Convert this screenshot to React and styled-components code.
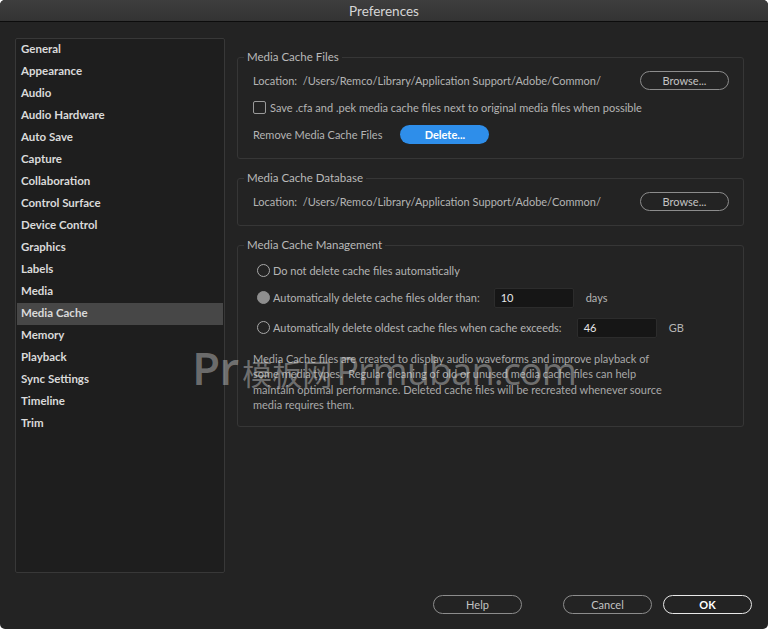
import React from 'react';
import styled, { createGlobalStyle } from 'styled-components';

const GlobalStyle = createGlobalStyle`
  html, body {
    margin: 0;
    padding: 0;
    background: #ffffff;
  }
  * {
    box-sizing: border-box;
  }
`;

const FONT = `Lato, "Noto Sans", "Noto Sans CJK SC", sans-serif`;

const sections = [
  'General', 'Appearance', 'Audio', 'Audio Hardware', 'Auto Save', 'Capture',
  'Collaboration', 'Control Surface', 'Device Control', 'Graphics', 'Labels',
  'Media', 'Media Cache', 'Memory', 'Playback', 'Sync Settings', 'Timeline', 'Trim',
];

const PATH = '/Users/Remco/Library/Application Support/Adobe/Common/';

export default function App() {
  return (
    <>
      <GlobalStyle />
      <Window>
        <TitleBar>Preferences</TitleBar>
        <Body>
          <Sidebar>
            {sections.map((s) => (
              <NavItem key={s} $active={s === 'Media Cache'}>{s}</NavItem>
            ))}
          </Sidebar>

          <Panel>
            {/* Media Cache Files */}
            <Group>
              <Legend>Media Cache Files</Legend>
              <Content>
                <Row>
                  <Label>Location:&nbsp;&nbsp;{PATH}</Label>
                  <Spacer />
                  <Button>Browse...</Button>
                </Row>
                <Row>
                  <Checkbox />
                  <Label>Save .cfa and .pek media cache files next to original media files when possible</Label>
                </Row>
                <Row>
                  <Label>Remove Media Cache Files</Label>
                  <Button $primary $offset={18}>Delete...</Button>
                </Row>
              </Content>
            </Group>

            {/* Media Cache Database */}
            <Group>
              <Legend>Media Cache Database</Legend>
              <Content>
                <Row>
                  <Label>Location:&nbsp;&nbsp;{PATH}</Label>
                  <Spacer />
                  <Button>Browse...</Button>
                </Row>
              </Content>
            </Group>

            {/* Media Cache Management */}
            <Group>
              <Legend>Media Cache Management</Legend>
              <Content $bottom={13}>
                <RadioRow $top={2}>
                  <Radio />
                  <Label>Do not delete cache files automatically</Label>
                </RadioRow>
                <RadioRow>
                  <Radio $checked />
                  <Label>Automatically delete cache files older than:</Label>
                  <Field $left={14}>10</Field>
                  <Unit>days</Unit>
                </RadioRow>
                <RadioRow $top={3}>
                  <Radio />
                  <Label>Automatically delete oldest cache files when cache exceeds:</Label>
                  <Field $left={15}>46</Field>
                  <Unit>GB</Unit>
                </RadioRow>
                <Note>
                  Media Cache files are created to display audio waveforms and improve playback of
                  some media types.&nbsp; Regular cleaning of old or unused media cache files can help
                  maintain optimal performance. Deleted cache files will be recreated whenever source
                  media requires them.
                </Note>
              </Content>
            </Group>
          </Panel>
        </Body>

        <Footer>
          <Button>Help</Button>
          <Button $offset={41}>Cancel</Button>
          <Button $offset={11} $default>OK</Button>
        </Footer>

        <Watermark>
          <WmPr>Pr</WmPr>
          <WmCn>模板网</WmCn>
          <WmSite>Prmuban.com</WmSite>
        </Watermark>
      </Window>
    </>
  );
}

// Window

const Window = styled.div`
  position: relative;
  width: 768px;
  height: 629px;
  background: #232323;
  border-radius: 5px;
  overflow: hidden;
  display: flex;
  flex-direction: column;
  font-family: ${FONT};
  color: #b4b4b4;
`;

const TitleBar = styled.div`
  height: 22px;
  flex: none;
  display: flex;
  align-items: center;
  justify-content: center;
  background: linear-gradient(#3e3e3e, #333333);
  border-bottom: 1px solid #0c0c0c;
  color: #d6d6d6;
  font-size: 13.5px;
`;

const Body = styled.div`
  display: flex;
  gap: 12px;
  padding: 16px 24px 0 15px;
  height: 551px;
  flex: none;
`;

// Sidebar

const Sidebar = styled.div`
  width: 210px;
  flex: none;
  background: #1e1e1e;
  border: 1px solid #383838;
  border-radius: 2px;
  padding: 0 1px;
  display: flex;
  flex-direction: column;
`;

const NavItem = styled.div`
  height: 22px;
  line-height: 20px;
  padding-left: 4px;
  font-size: 11.5px;
  font-weight: 700;
  color: #dadada;
  background: ${(p) => (p.$active ? '#474747' : 'transparent')};
`;

// Right side groups

const Panel = styled.div`
  flex: 1;
  display: flex;
  flex-direction: column;
  gap: 11px;
  padding-top: 11px;
`;

const Group = styled.fieldset`
  margin: 0;
  padding: 0;
  border: 1px solid #363636;
  border-radius: 3px;
  min-width: 0;
`;

const Legend = styled.legend`
  margin-left: 6px;
  padding: 0 3px;
  height: 16px;
  line-height: 16px;
  font-size: 11.5px;
  color: #bababa;
`;

const Content = styled.div`
  padding: 2px 14px ${(p) => p.$bottom ?? 10}px 15px;
`;

const Row = styled.div`
  display: flex;
  align-items: center;
  height: 27px;
`;

const RadioRow = styled(Row)`
  margin-top: ${(p) => p.$top ?? 0}px;
  padding-left: 4px;
`;

const Spacer = styled.div`
  flex: 1;
`;

const Label = styled.span`
  font-size: 11px;
  color: #b4b4b4;
  white-space: nowrap;
`;

const Checkbox = styled.span`
  width: 13px;
  height: 13px;
  border: 1px solid #9a9a9a;
  border-radius: 2px;
  margin-right: 4px;
  flex: none;
`;

const Radio = styled.span`
  width: 13px;
  height: 13px;
  border-radius: 50%;
  flex: none;
  margin-right: 3px;
  border: 1.5px solid ${(p) => (p.$checked ? '#8e8e8e' : '#a8a8a8')};
  background: ${(p) => (p.$checked ? '#8e8e8e' : 'transparent')};
`;

const Field = styled.span`
  width: 80px;
  height: 20px;
  margin-left: ${(p) => p.$left}px;
  padding-left: 6px;
  display: flex;
  align-items: center;
  background: #161616;
  border: 1px solid #2c2c2c;
  border-radius: 2px;
  font-size: 11px;
  color: #e6e6e6;
  flex: none;
`;

const Unit = styled(Label)`
  margin-left: 12px;
`;

const Note = styled.p`
  margin: 10px 0 0;
  max-width: 424px;
  font-size: 11px;
  line-height: 15.4px;
  color: #a9a9a9;
`;

// Buttons

const Button = styled.button`
  width: 89px;
  height: 19px;
  flex: none;
  margin: 0 0 0 ${(p) => p.$offset ?? 0}px;
  padding: 0;
  border-radius: 10px;
  font-family: ${FONT};
  font-size: 11px;
  cursor: pointer;
  background: ${(p) => (p.$primary ? '#2e8eea' : 'transparent')};
  border: ${(p) =>
    p.$primary ? 'none' : p.$default ? '1.5px solid #e8e8e8' : '1.5px solid #8c8c8c'};
  color: ${(p) => (p.$primary || p.$default ? '#ffffff' : '#c4c4c4')};
  font-weight: ${(p) => (p.$primary || p.$default ? 700 : 400)};
`;

const Footer = styled.div`
  display: flex;
  justify-content: flex-end;
  padding: 22px 16px 0 0;
`;

// Watermark overlay

const Watermark = styled.div`
  position: absolute;
  left: 192px;
  top: 336px;
  display: flex;
  align-items: baseline;
  gap: 4px;
  color: rgba(220, 220, 220, 0.42);
  font-family: "Open Sans", "Noto Sans CJK SC", sans-serif;
  pointer-events: none;
`;

const WmPr = styled.span`
  font-size: 46px;
  font-weight: 600;
  letter-spacing: -1px;
`;

const WmCn = styled.span`
  font-size: 30px;
  font-family: "Noto Sans CJK SC", sans-serif;
`;

const WmSite = styled.span`
  font-size: 38px;
  letter-spacing: -1px;
`;
